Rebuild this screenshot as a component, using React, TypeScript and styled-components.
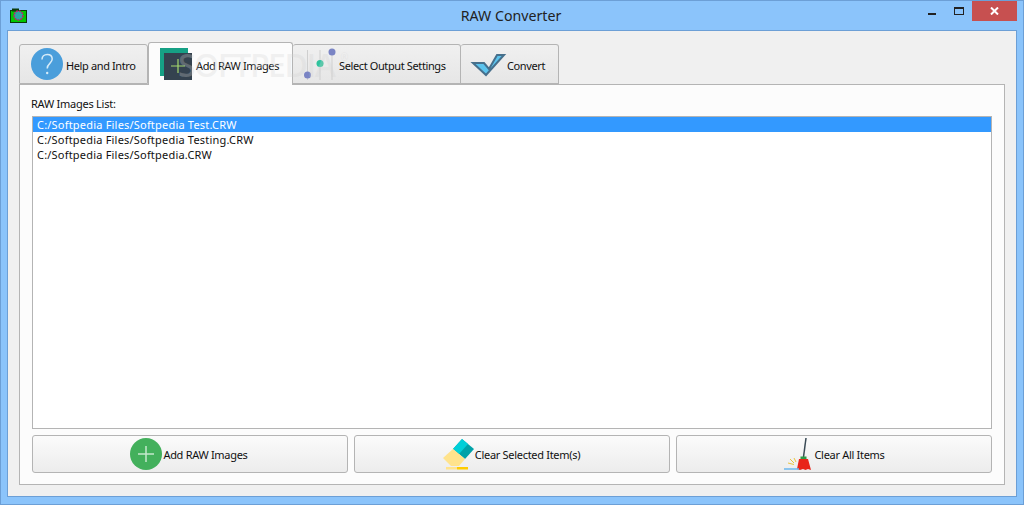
import React from 'react';
import styled, { createGlobalStyle } from 'styled-components';

const GlobalStyle = createGlobalStyle`
  html, body {
    margin: 0;
    padding: 0;
    background: #8bc4fb;
  }
  body {
    font-family: 'Noto Sans', 'Open Sans', 'Liberation Sans', sans-serif;
    font-size: 11px;
    color: #111;
  }
`;

const Frame = styled.div`
  box-sizing: border-box;
  width: 1024px;
  height: 505px;
  display: flex;
  flex-direction: column;
  background: #8bc4fb;
  border: 1px solid #6c9fd6;
  position: relative;
  overflow: hidden;
`;

const TitleBar = styled.div`
  height: 29px;
  flex: none;
  display: flex;
  align-items: flex-start;
  position: relative;
`;

const AppIcon = styled.svg`
  width: 17px;
  height: 15px;
  margin: 7px 0 0 9px;
`;

const Title = styled.div`
  position: absolute;
  left: 0;
  right: 0;
  top: 5px;
  text-align: center;
  font-size: 14.2px;
  line-height: 19px;
  color: #222;
  padding-right: 2px;
`;

const WindowButtons = styled.div`
  margin-left: auto;
  margin-right: 6px;
  display: flex;
  align-items: flex-start;
`;

const ControlButton = styled.div<{ $close?: boolean; $w: number; $pt?: number }>`
  box-sizing: border-box;
  width: ${p => p.$w}px;
  height: 20px;
  padding-top: ${p => p.$pt ?? 0}px;
  display: flex;
  align-items: center;
  justify-content: center;
  background: ${p => (p.$close ? '#c75050' : 'transparent')};
`;

const Client = styled.div`
  flex: 1;
  margin: 0 6px 7px 6px;
  background: #f0f0f0;
  border: 1px solid #6c9fd6;
  padding: 10px 11px 11px;
  display: flex;
  flex-direction: column;
  min-height: 0;
`;

const TabBar = styled.div`
  display: flex;
  align-items: flex-end;
  height: 43px;
  flex: none;
  position: relative;
  z-index: 1;
`;

const Tab = styled.div<{ $active?: boolean; $w: number }>`
  box-sizing: border-box;
  width: ${p => p.$w}px;
  height: ${p => (p.$active ? 43 : 40)}px;
  margin-bottom: ${p => (p.$active ? -1 : 0)}px;
  padding-left: 11px;
  display: flex;
  align-items: center;
  gap: ${p => (p.$active ? 4 : 3)}px;
  border: 1px solid #b4b4b4;
  border-bottom: ${p => (p.$active ? 'none' : '1px solid #b4b4b4')};
  border-left: ${p => (p.$active ? '1px solid #b4b4b4' : 'none')};
  border-radius: 3px 3px 0 0;
  background: ${p => (p.$active ? '#fcfcfc' : 'linear-gradient(#f0f0f0, #e6e6e6)')};
  white-space: nowrap;
  &:first-child {
    border-left: 1px solid #b4b4b4;
  }
`;

const TabLabel = styled.span`
  letter-spacing: -0.38px;
  margin-top: 2px;
`;

const TabIcon = styled.svg`
  width: 32px;
  height: 32px;
  flex: none;
  overflow: visible;
`;

const Pane = styled.div`
  flex: 1;
  min-height: 0;
  background: #fcfcfc;
  border: 1px solid #b4b4b4;
  padding: 11px 12px 11px;
  display: flex;
  flex-direction: column;
`;

const ListLabel = styled.div`
  line-height: 15px;
  height: 15px;
  margin: 0 0 5px -1px;
  letter-spacing: -0.25px;
`;

const FileList = styled.div`
  flex: 1;
  min-height: 0;
  background: #fff;
  border: 1px solid #b4b4b4;
`;

const FileRow = styled.div<{ $selected?: boolean }>`
  height: 15px;
  line-height: 15px;
  padding-left: 4px;
  letter-spacing: 0.2px;
  background: ${p => (p.$selected ? '#3399ff' : 'transparent')};
  color: ${p => (p.$selected ? '#fff' : '#111')};
`;

const ButtonRow = styled.div`
  display: grid;
  grid-template-columns: repeat(3, 316px);
  gap: 6px;
  margin-top: 6px;
  flex: none;
`;

const ActionButton = styled.div`
  box-sizing: border-box;
  height: 38px;
  padding-right: 2px;
  display: flex;
  align-items: center;
  justify-content: center;
  gap: 1px;
  border: 1px solid #b4b4b4;
  border-radius: 3px;
  background: linear-gradient(#fbfbfb, #ececec);
  white-space: nowrap;
  letter-spacing: -0.3px;
`;

const ButtonIcon = styled.svg`
  width: 32px;
  height: 32px;
  flex: none;
  overflow: visible;
`;

const Watermark = styled.div`
  position: absolute;
  left: 177px;
  top: 41px;
  font-family: 'Open Sans', sans-serif;
  font-weight: 600;
  font-size: 32px;
  line-height: 46px;
  letter-spacing: -1.5px;
  color: rgba(210, 210, 210, 0.28);
  pointer-events: none;
  z-index: 2;
  sup {
    font-size: 10px;
    font-weight: 400;
    letter-spacing: 0;
    vertical-align: 16px;
    line-height: 0;
    margin-left: 6px;
  }
`;

const HelpIcon = () => (
  <TabIcon viewBox="0 0 32 32">
    <circle cx="16" cy="16" r="16" fill="#4a9edb" />
    <path d="M11 11.500c0-3 2.200-5 5.200-5s5 1.900 5 4.600c0 4.300-5 4.400-5 9.400" fill="none" stroke="#d6ebf8" strokeWidth="1.500" />
    <circle cx="16.200" cy="25" r="1.200" fill="#d6ebf8" />
  </TabIcon>
);

const AddImagesIcon = () => (
  <TabIcon viewBox="0 0 32 32">
    <rect x="0" y="0" width="28" height="28" fill="#16a085" />
    <rect x="4" y="5" width="28" height="27" fill="#34424f" />
    <path d="M18 11v14M11 18h14" stroke="#a5d86e" strokeWidth="1.200" />
  </TabIcon>
);

const SettingsIcon = () => (
  <TabIcon viewBox="0 0 32 32">
    <path d="M3.500 2v30M16 2v30M28 2v30" stroke="#cfcfcf" strokeWidth="1" />
    <circle cx="3.500" cy="27" r="3.500" fill="#7a84c4" />
    <circle cx="16" cy="15.500" r="3.500" fill="#2fc39c" />
    <circle cx="28" cy="4" r="3.500" fill="#7a84c4" />
  </TabIcon>
);

const CheckIcon = () => (
  <TabIcon viewBox="0 0 32 32">
    <path d="M1 15h11l5 6L25 7h7L14 27z" fill="#5cc4ee" stroke="#47708c" strokeWidth="2" strokeLinejoin="miter" />
  </TabIcon>
);

const PlusIcon = () => (
  <ButtonIcon viewBox="0 0 32 32">
    <circle cx="16" cy="16" r="16" fill="#43b05c" />
    <path d="M16 8v16M8 16h16" stroke="#c4e8cc" strokeWidth="1.500" />
  </ButtonIcon>
);

const EraserIcon = () => (
  <ButtonIcon viewBox="0 0 32 32">
    <path d="M11 11 20 1l12 10-9 10z" fill="#00a2a8" />
    <path d="M11 11 20 1l6 5-9 10z" fill="#00cfd8" />
    <path d="M1 20l10-9 12 10-6 7H9z" fill="#ffe38c" />
    <rect x="4" y="29" width="11" height="2.500" fill="#ffe38c" />
    <rect x="15" y="29" width="11" height="2.500" fill="#ffcc00" />
  </ButtonIcon>
);

const BroomIcon = () => (
  <ButtonIcon viewBox="0 0 32 32">
    <path d="M25 0 22.500 19" stroke="#3a4a55" strokeWidth="1.500" />
    <rect x="19.500" y="18.500" width="6" height="2.500" fill="#2f9a45" />
    <path d="M18 21h9l3 11-3-1-2.500 1-2.500-1-3 1-3-1z" fill="#e8251a" />
    <path d="M9 21l4 4M7 25l6 1.500M13 20l2 4" stroke="#e8c440" strokeWidth="1" />
    <path d="M3 31h15" stroke="#6ab6ec" strokeWidth="1.500" />
  </ButtonIcon>
);

const files = [
  'C:/Softpedia Files/Softpedia Test.CRW',
  'C:/Softpedia Files/Softpedia Testing.CRW',
  'C:/Softpedia Files/Softpedia.CRW',
];

const App: React.FC = () => (
  <>
    <GlobalStyle />
    <Frame>
      <TitleBar>
        <AppIcon viewBox="0 0 17 15">
          <rect x="0.500" y="2.500" width="16" height="12" fill="#00c800" stroke="#0a3a0a" />
          <rect x="2" y="0.500" width="7" height="3" fill="#0a3a0a" />
          <circle cx="8.500" cy="7.500" r="4.500" fill="#2aa5a5" stroke="#c0206a" strokeWidth="1.500" strokeDasharray="2 1" />
        </AppIcon>
        <Title>RAW Converter</Title>
        <WindowButtons>
          <ControlButton $w={28} $pt={6}>
            <svg width="8" height="2"><rect width="8" height="2" fill="#222" /></svg>
          </ControlButton>
          <ControlButton $w={26}>
            <svg width="10" height="8"><rect x="0.500" y="0.500" width="9" height="7" fill="none" stroke="#222" /><rect width="10" height="2" fill="#222" /></svg>
          </ControlButton>
          <ControlButton $w={45} $close>
            <svg width="9" height="8"><path d="M1 0.500l7 7M8 0.500l-7 7" stroke="#fff" strokeWidth="2" /></svg>
          </ControlButton>
        </WindowButtons>
      </TitleBar>
      <Client>
        <TabBar>
          <Tab $w={129}><HelpIcon /><TabLabel>Help and Intro</TabLabel></Tab>
          <Tab $w={145} $active><AddImagesIcon /><TabLabel>Add RAW Images</TabLabel></Tab>
          <Tab $w={168}><SettingsIcon /><TabLabel>Select Output Settings</TabLabel></Tab>
          <Tab $w={98}><CheckIcon /><TabLabel>Convert</TabLabel></Tab>
        </TabBar>
        <Pane>
          <ListLabel>RAW Images List:</ListLabel>
          <FileList>
            {files.map((f, i) => (
              <FileRow key={f} $selected={i === 0}>{f}</FileRow>
            ))}
          </FileList>
          <ButtonRow>
            <ActionButton><PlusIcon />Add RAW Images</ActionButton>
            <ActionButton><EraserIcon />Clear Selected Item(s)</ActionButton>
            <ActionButton><BroomIcon />Clear All Items</ActionButton>
          </ButtonRow>
        </Pane>
      </Client>
      <Watermark>SOFTPEDIA<sup>®</sup></Watermark>
    </Frame>
  </>
);

export default App;
